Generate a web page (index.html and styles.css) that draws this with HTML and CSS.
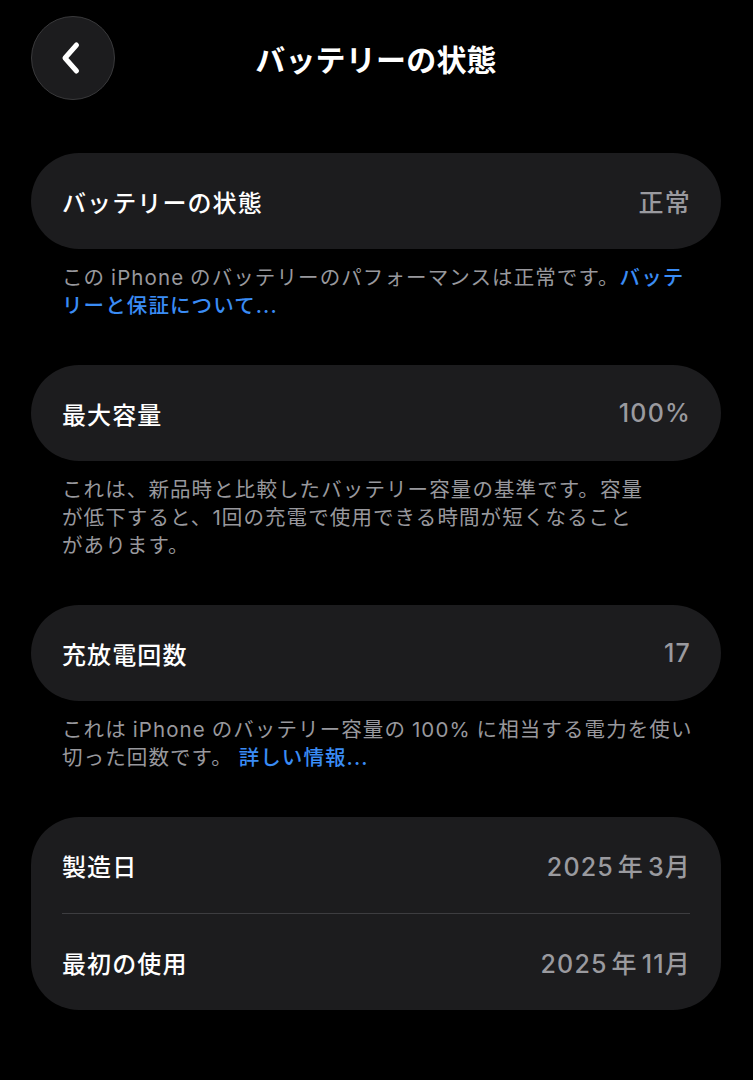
FILE: index.html
```html
<!DOCTYPE html>
<html lang="ja">
<head>
<meta charset="utf-8">
<title>バッテリーの状態</title>
<link rel="stylesheet" href="styles.css">
</head>
<body>
<div class="screen">
  <header class="nav">
    <button class="back" aria-label="戻る">
      <svg width="22" height="34" viewBox="0 0 22 34" aria-hidden="true">
        <path d="M16.5 4 L5 17 L16.5 30" fill="none" stroke="#ffffff" stroke-width="5" stroke-linecap="round" stroke-linejoin="round"/>
      </svg>
    </button>
    <h1 class="title">バッテリーの状態</h1>
    <span class="spacer"></span>
  </header>

  <main class="content">
    <section class="group">
      <div class="card">
        <div class="row"><span class="label">バッテリーの状態</span><span class="value">正常</span></div>
      </div>
      <p class="footer">この iPhone のバッテリーのパフォーマンスは正常です。<a class="link" href="#">バッテ<br>リーと保証について...</a></p>
    </section>

    <section class="group">
      <div class="card">
        <div class="row"><span class="label">最大容量</span><span class="value">100%</span></div>
      </div>
      <p class="footer">これは、新品時と比較したバッテリー容量の基準です。容量<br>が低下すると、1回の充電で使用できる時間が短くなること<br>があります。</p>
    </section>

    <section class="group">
      <div class="card">
        <div class="row"><span class="label">充放電回数</span><span class="value">17</span></div>
      </div>
      <p class="footer">これは iPhone のバッテリー容量の 100% に相当する電力を使い<br>切った回数です。 <a class="link" href="#">詳しい情報...</a></p>
    </section>

    <section class="group">
      <div class="card">
        <div class="row"><span class="label">製造日</span><span class="value">2025 年 3月</span></div>
        <div class="sep"></div>
        <div class="row"><span class="label">最初の使用</span><span class="value">2025 年 11月</span></div>
      </div>
    </section>
  </main>
</div>
</body>
</html>
```

FILE: styles.css
```css
* { box-sizing: border-box; }

html, body {
  margin: 0;
  padding: 0;
  background: #000000;
}

body {
  font-family: "Inter", "Noto Sans CJK JP", sans-serif;
  color: #ffffff;
  width: 753px;
  min-height: 1080px;
}

.screen {
  padding: 16px 32px 0 31px;
}

.nav {
  display: grid;
  grid-template-columns: 84px 1fr 84px;
  align-items: center;
  height: 84px;
}

.back {
  width: 84px;
  height: 84px;
  border-radius: 50%;
  background: #1c1c1e;
  border: 1.5px solid #3a3a3c;
  display: flex;
  align-items: center;
  justify-content: center;
  padding: 0 4px 0 0;
  margin: 0;
}

.title {
  margin: 0;
  text-align: center;
  font-family: "Noto Sans CJK JP", sans-serif;
  font-size: 30px;
  font-weight: 700;
  letter-spacing: 0.2px;
  color: #ffffff;
}

.content {
  margin-top: 53px;
  display: flex;
  flex-direction: column;
  gap: 45px;
}

.card {
  background: #1c1c1e;
  border-radius: 48px;
  padding: 0 31px;
}

.row {
  height: 96px;
  display: flex;
  align-items: center;
  justify-content: space-between;
}

.label {
  font-family: "Noto Sans CJK JP", sans-serif;
  font-size: 24px;
  font-weight: 500;
  letter-spacing: 1.1px;
  color: #ffffff;
}

.value {
  font-size: 25px;
  font-weight: 500;
  letter-spacing: 1.2px;
  color: #9a9a9f;
  word-spacing: -4px;
  margin-right: -1px;
}

.sep {
  height: 1px;
  background: #3d3d40;
}

.footer {
  margin: 15px 0 0;
  padding: 0 31px;
  font-size: 20.5px;
  line-height: 28px;
  letter-spacing: 1.1px;
  color: #98989d;
  white-space: nowrap;
  word-spacing: -1px;
}

.link {
  color: #3a8cf5;
  text-decoration: none;
  font-weight: 500;
}
```
